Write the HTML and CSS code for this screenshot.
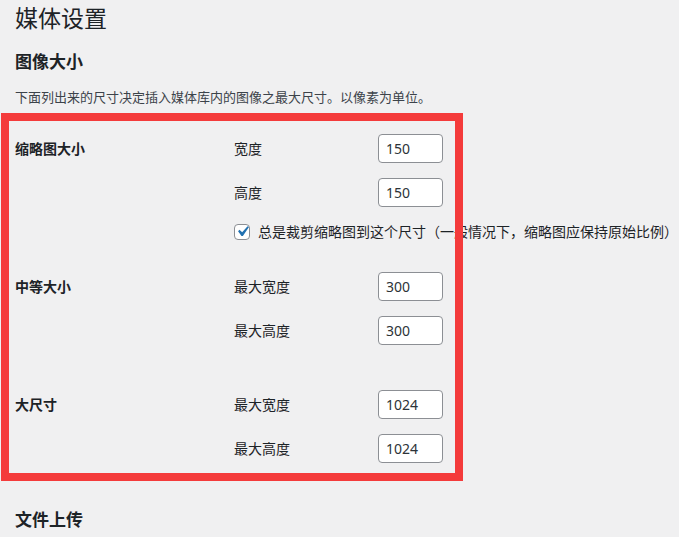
FILE: index.html
```html
<!DOCTYPE html>
<html lang="zh-CN">
<head>
<meta charset="utf-8">
<title>媒体设置</title>
<link rel="stylesheet" href="styles.css">
</head>
<body>
<div class="wrap">
  <h1 class="title">媒体设置</h1>
  <h2 class="section-title">图像大小</h2>
  <p class="desc">下面列出来的尺寸决定插入媒体库内的图像之最大尺寸。以像素为单位。</p>

  <div class="size-row first">
    <div class="row-label">缩略图大小</div>
    <div class="fields">
      <div class="field"><span class="field-label">宽度</span><span class="input">150</span></div>
      <div class="field"><span class="field-label">高度</span><span class="input">150</span></div>
      <div class="check-line">
        <span class="checkbox"><svg viewBox="0 0 20 20" width="21" height="21"><path d="M14.83 4.89l1.34.94-5.81 8.38H9.02L5.78 9.67l1.34-1.25 2.57 2.4z" fill="#2271b1"/></svg></span>
        <span class="check-text">总是裁剪缩略图到这个尺寸（一般情况下，缩略图应保持原始比例）</span>
      </div>
    </div>
  </div>

  <div class="size-row medium">
    <div class="row-label">中等大小</div>
    <div class="fields">
      <div class="field"><span class="field-label">最大宽度</span><span class="input">300</span></div>
      <div class="field"><span class="field-label">最大高度</span><span class="input">300</span></div>
    </div>
  </div>

  <div class="size-row large">
    <div class="row-label">大尺寸</div>
    <div class="fields">
      <div class="field"><span class="field-label">最大宽度</span><span class="input">1024</span></div>
      <div class="field"><span class="field-label">最大高度</span><span class="input">1024</span></div>
    </div>
  </div>

  <h2 class="section-title upload">文件上传</h2>

  <div class="highlight"></div>
</div>
</body>
</html>
```

FILE: styles.css
```css
html, body {
  margin: 0;
  padding: 0;
  background: #f0f0f1;
}
body {
  font-family: "Noto Sans", "Noto Sans CJK SC", sans-serif;
  color: #1d2327;
  overflow: hidden;
}
.wrap {
  position: relative;
  padding-left: 15px;
  height: 537px;
}
.title {
  margin: 0;
  font-size: 23px;
  font-weight: 400;
  line-height: 36px;
  color: #1d2327;
}
.section-title {
  margin: 14px 0 0;
  font-size: 17px;
  font-weight: 700;
  line-height: 24px;
  color: #1d2327;
}
.section-title.upload {
  margin-top: 45px;
}
.desc {
  margin: 13px 0 0;
  font-size: 13px;
  line-height: 20px;
  color: #3c434a;
}
.size-row {
  display: grid;
  grid-template-columns: 219px 1fr;
}
.size-row.first { margin-top: 27px; }
.size-row.medium { margin-top: 30px; }
.size-row.large { margin-top: 45px; }
.row-label {
  font-size: 14px;
  font-weight: 700;
  line-height: 29px;
}
.fields {
  display: flex;
  flex-direction: column;
  gap: 15px;
}
.field {
  display: flex;
  align-items: center;
  height: 29px;
}
.field-label {
  width: 144px;
  font-size: 14px;
  line-height: 29px;
  color: #1d2327;
}
.input {
  box-sizing: border-box;
  width: 65px;
  height: 29px;
  border: 1px solid #8c8f94;
  border-radius: 4px;
  background: #fff;
  padding-left: 7px;
  font-size: 14px;
  line-height: 27px;
  color: #2c3338;
}
.check-line {
  display: flex;
  align-items: center;
  height: 20px;
  white-space: nowrap;
}
.checkbox {
  box-sizing: border-box;
  width: 16px;
  height: 16px;
  border: 1px solid #8c8f94;
  border-radius: 4px;
  background: #fff;
  display: flex;
  align-items: center;
  justify-content: center;
  overflow: visible;
  flex: none;
}
.checkbox svg {
  flex: none;
  margin: -1px -3px 0 -3px;
}
.check-text {
  margin-left: 8px;
  font-size: 14px;
  line-height: 20px;
  color: #1d2327;
}
.highlight {
  position: absolute;
  left: 1px;
  top: 113px;
  width: 462px;
  height: 368px;
  box-sizing: border-box;
  border: 8px solid #f43b3b;
  pointer-events: none;
}
```
